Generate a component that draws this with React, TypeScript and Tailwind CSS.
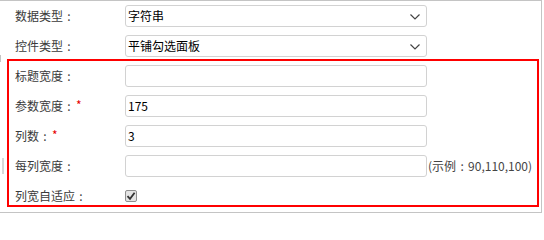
import { ReactNode } from "react";

const font = { fontFamily: '"Noto Sans CJK SC", "Liberation Sans", sans-serif' };

const Chevron = () => (
  <svg width="10" height="6" viewBox="0 0 10 6" className="absolute right-[6px] top-[8px]">
    <polyline points="0.5,0.5 5,5 9.5,0.5" fill="none" stroke="#444" strokeWidth="1.2" />
  </svg>
);

const Colon = () => <span className="inline-block w-[12px] text-center">:</span>;

const Field = ({ value = "", select = false }: { value?: string; select?: boolean }) => (
  <div className="relative w-[302px] h-[22px] border border-[#d2d2d2] rounded-[3px] bg-white flex items-center pl-[2px] text-[12px] text-black">
    {value}
    {select && <Chevron />}
  </div>
);

const Label = ({ text, required = false }: { text: string; required?: boolean }) => (
  <div className="w-[110px] h-[22px] shrink-0 flex items-center text-[12px] text-[#3a3a3a]">
    <span>{text}</span>
    <Colon />
    {required && <span className="text-[#e60000] ml-[1px] -mt-[3px]">*</span>}
  </div>
);

const Row = ({ children, className }: { children: ReactNode; className: string }) => (
  <div className={`flex items-start pt-[4px] ${className}`}>{children}</div>
);

export default function App() {
  return (
    <div className="relative w-[542px] h-[213px] border-t border-r border-b border-[#c4c4c4] bg-white" style={font}>
      <div className="absolute left-0 top-[54px] w-px h-[7px] bg-[#c4c4c4]" />
      <div className="absolute left-[2px] top-[157px] w-[2px] h-[16px] bg-[#d8d8d8]" />

      {/* top rows */}
      <Row className="h-[30px] pl-[15px]">
        <Label text="数据类型" />
        <Field value="字符串" select />
      </Row>
      <Row className="h-[28px] pl-[15px]">
        <Label text="控件类型" />
        <Field value="平铺勾选面板" select />
      </Row>

      {/* highlighted group */}
      <div className="ml-[7px] w-[532px] h-[148px] border-2 border-[#ff0000]">
        <Row className="h-[30px] pl-[6px]">
          <Label text="标题宽度" />
          <Field />
        </Row>
        <Row className="h-[30px] pl-[6px]">
          <Label text="参数宽度" required />
          <Field value="175" />
        </Row>
        <Row className="h-[30px] pl-[6px]">
          <Label text="列数" required />
          <Field value="3" />
        </Row>
        <Row className="h-[30px] pl-[6px]">
          <Label text="每列宽度" />
          <Field />
          <span className="h-[22px] flex items-center ml-[1px] text-[12px] text-[#454545] whitespace-nowrap">
            (示例<Colon />90,110,100)
          </span>
        </Row>
        <Row className="h-[24px] pl-[6px]">
          <Label text="列宽自适应" />
          <div className="h-[22px] flex items-center">
            <span className="w-[12px] h-[12px] border border-[#8f8f8f] rounded-[2px] bg-[#e4e4e4] flex items-center justify-center">
              <svg width="10" height="10" viewBox="0 0 10 10">
                <path d="M1.5 5.2 L4 7.8 L8.6 1.8" fill="none" stroke="#333" strokeWidth="1.8" />
              </svg>
            </span>
          </div>
        </Row>
      </div>
    </div>
  );
}
